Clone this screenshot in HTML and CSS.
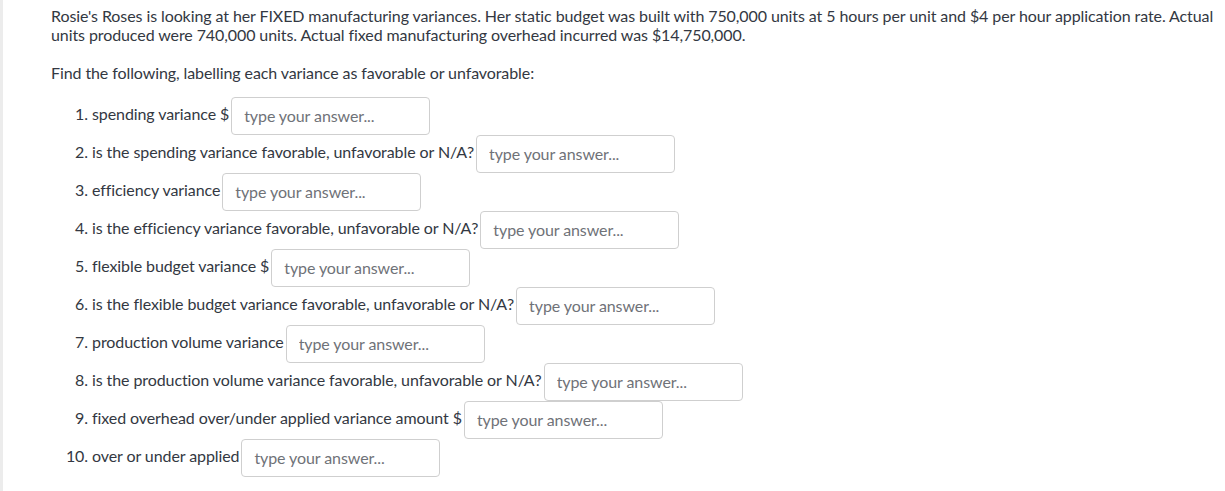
FILE: index.html
```html
<!DOCTYPE html>
<html>
<head>
<meta charset="utf-8">
<link rel="stylesheet" href="styles.css">
</head>
<body>
<div class="page">
  <div class="content">
    <p class="intro">Rosie's Roses is looking at her FIXED manufacturing variances. Her static budget was built with 750,000 units at 5 hours per unit and $4 per hour application rate. Actual units produced were 740,000 units. Actual fixed manufacturing overhead incurred was $14,750,000.</p>
    <p class="intro find">Find the following, labelling each variance as favorable or unfavorable:</p>
    <ol class="questions">
      <li>spending variance $<input class="answer" type="text" placeholder="type your answer..."></li>
      <li>is the spending variance favorable, unfavorable or N/A?<input class="answer" type="text" placeholder="type your answer..."></li>
      <li>efficiency variance<input class="answer" type="text" placeholder="type your answer..."></li>
      <li>is the efficiency variance favorable, unfavorable or N/A?<input class="answer" type="text" placeholder="type your answer..."></li>
      <li>flexible budget variance $<input class="answer" type="text" placeholder="type your answer..."></li>
      <li>is the flexible budget variance favorable, unfavorable or N/A?<input class="answer" type="text" placeholder="type your answer..."></li>
      <li>production volume variance<input class="answer" type="text" placeholder="type your answer..."></li>
      <li>is the production volume variance favorable, unfavorable or N/A?<input class="answer" type="text" placeholder="type your answer..."></li>
      <li>fixed overhead over/under applied variance amount $<input class="answer" type="text" placeholder="type your answer..."></li>
      <li>over or under applied<input class="answer" type="text" placeholder="type your answer..."></li>
    </ol>
  </div>
</div>
</body>
</html>
```
FILE: styles.css
```css
html, body {
  margin: 0;
  padding: 0;
  background: #ffffff;
}
.page {
  border-left: 3px solid #ececec;
  min-height: 491px;
  box-sizing: border-box;
}
.content {
  padding: 6px 0 0 48px;
  font-family: Lato, "Open Sans", sans-serif;
  font-size: 16px;
  line-height: 19px;
  letter-spacing: -0.09px;
  color: #333842;
}
.intro {
  margin: 0;
}
.find {
  margin-top: 19px;
}
.questions {
  margin: 13px 0 0 0;
  padding-left: 41px;
}
.questions li {
  height: 38px;
  line-height: 38px;
}
.answer {
  box-sizing: border-box;
  width: 199px;
  height: 38px;
  vertical-align: middle;
  border: 1px solid #cfcfcf;
  border-radius: 4px;
  padding: 0 12px;
  font-family: Lato, "Open Sans", sans-serif;
  font-size: 16px;
  letter-spacing: -0.09px;
  color: #333842;
  background: #fff;
  margin: 0 0 0 2px;
}
.answer::placeholder {
  color: #6f7278;
  opacity: 1;
}
```
